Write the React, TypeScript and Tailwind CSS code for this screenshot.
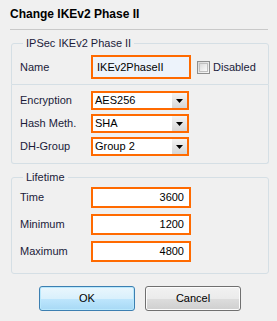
const font = "font-['Liberation_Sans',Arial,sans-serif]";

function Label({ children }: { children: string }) {
  return <span className="w-[71px] shrink-0 text-[11px] text-[#1b1b3a]">{children}</span>;
}

function Select({ value }: { value: string }) {
  return (
    <div className="flex h-[19px] w-[98px] items-stretch border-2 border-[#ff6a00] bg-white">
      <span className="flex flex-1 items-center pl-[2px] text-[11px] leading-none text-black">{value}</span>
      <span className="flex w-[15px] items-center justify-center bg-[linear-gradient(to_bottom,#f4f4f4,#d6d6d6)]">
        <svg width="7" height="4" viewBox="0 0 7 4">
          <path d="M0 0h7L3.5 4z" fill="#000" />
        </svg>
      </span>
    </div>
  );
}

function NumberBox({ value }: { value: string }) {
  return (
    <div className="flex h-[21px] w-[100px] items-center justify-end border-2 border-[#ff6a00] bg-white pr-[5px] text-[11px] text-black">
      {value}
    </div>
  );
}

export default function App() {
  return (
    <div className={`${font} flex h-[321px] w-[277px] flex-col bg-[#f0f0f0]`}>
      {/* title + separator */}
      <div className="ml-[10px] mr-[9px] h-[30px] border-b border-[#c9c9c9] pt-[6px]">
        <h1 className="text-[12px] font-bold leading-[16px] text-black">Change IKEv2 Phase II</h1>
      </div>

      {/* IPSec group */}
      <fieldset className="ml-[11px] mt-[7px] w-[258px] rounded-t-[3px] border border-[#d5dfe5] px-[8px] pb-[5px]">
        <legend className="ml-[3px] px-[3px] text-[11px] leading-[13px] text-[#1b1b3a]">IPSec IKEv2 Phase II</legend>
        <div className="mt-[5px] flex items-center">
          <Label>Name</Label>
          <div className="flex h-[24px] w-[100px] items-center border-2 border-[#ff6a00] bg-[#edf3fb] pl-[4px] text-[11px] text-black">
            IKEv2PhaseII
          </div>
          <div className="ml-[6px] h-[13px] w-[13px] border border-[#8e8f8f] bg-[linear-gradient(135deg,#d8d8d8,#f8f8f8)] p-[1px]">
            <div className="h-full w-full border border-[#c0c0c0] bg-[linear-gradient(135deg,#dcdcdc,#fbfbfb)]" />
          </div>
          <span className="ml-[3px] text-[11px] text-[#1b1b3a]">Disabled</span>
        </div>
      </fieldset>

      {/* crypto group */}
      <div className="ml-[11px] w-[258px] rounded-b-[3px] border-x border-b border-[#d5dfe5] px-[8px] pb-[7px] pt-[6px]">
        <div className="flex flex-col gap-[4px]">
          <div className="flex items-center">
            <Label>Encryption</Label>
            <Select value="AES256" />
          </div>
          <div className="flex items-center">
            <Label>Hash Meth.</Label>
            <Select value="SHA" />
          </div>
          <div className="flex items-center">
            <Label>DH-Group</Label>
            <Select value="Group 2" />
          </div>
        </div>
      </div>

      {/* lifetime group */}
      <fieldset className="ml-[11px] mt-[7px] w-[258px] rounded-[3px] border border-[#d5dfe5] px-[8px] pb-[11px]">
        <legend className="ml-[3px] px-[3px] text-[11px] leading-[13px] text-[#1b1b3a]">Lifetime</legend>
        <div className="mt-[3px] flex flex-col gap-[6px]">
          <div className="flex items-center">
            <Label>Time</Label>
            <NumberBox value="3600" />
          </div>
          <div className="flex items-center">
            <Label>Minimum</Label>
            <NumberBox value="1200" />
          </div>
          <div className="flex items-center">
            <Label>Maximum</Label>
            <NumberBox value="4800" />
          </div>
        </div>
      </fieldset>

      {/* buttons */}
      <div className="ml-[39px] mt-[12px] flex gap-[10px]">
        <button className="h-[25px] w-[96px] rounded-[3px] border border-[#3c7fb1] bg-[linear-gradient(to_bottom,#eaf6fd_0%,#d9f0fc_50%,#bee6fd_51%,#a7d9f5_100%)] text-[11px] text-black shadow-[inset_0_0_0_1px_#b9e8fc]">
          OK
        </button>
        <button className="h-[25px] w-[96px] rounded-[3px] border border-[#707070] bg-[linear-gradient(to_bottom,#f2f2f2_0%,#ebebeb_50%,#dddddd_51%,#cfcfcf_100%)] text-[11px] text-black shadow-[inset_0_0_0_1px_#fcfcfc]">
          Cancel
        </button>
      </div>
    </div>
  );
}
